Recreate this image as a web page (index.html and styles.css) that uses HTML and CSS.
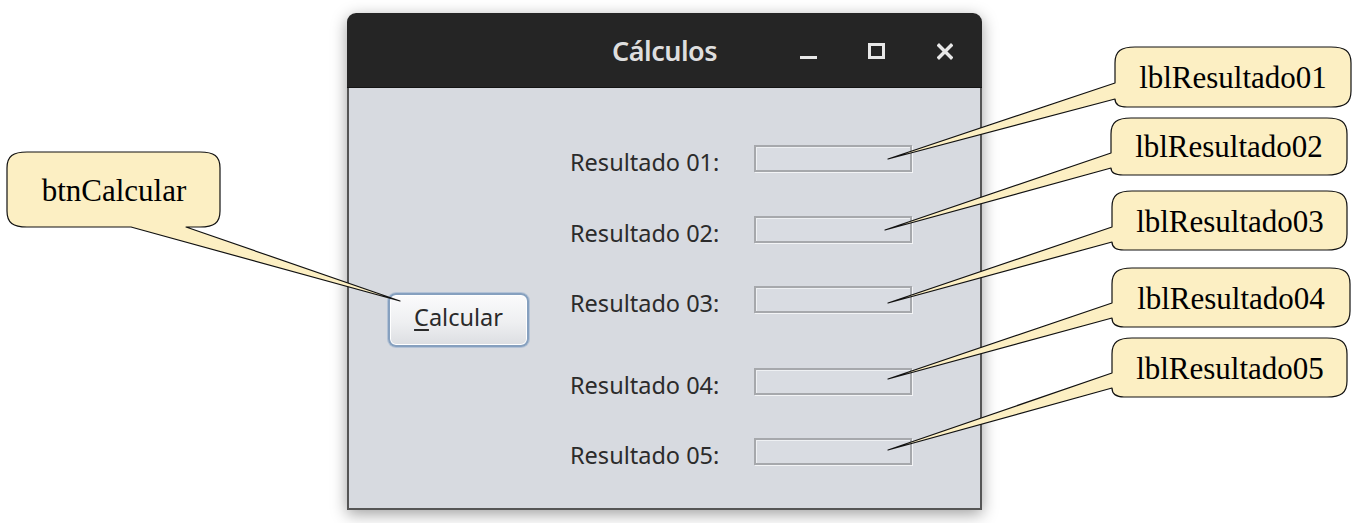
FILE: index.html
```html
<!DOCTYPE html>
<html lang="pt">
<head>
<meta charset="utf-8">
<title>Cálculos</title>
<link rel="stylesheet" href="styles.css">
</head>
<body>
<div class="stage">
  <div class="window">
    <div class="titlebar">
      <span class="spacer"></span>
      <div class="title">Cálculos</div>
      <div class="controls">
        <svg class="ctl" width="17" height="17" viewBox="0 0 17 17"><rect x="0" y="13" width="17" height="3" fill="currentColor"/></svg>
        <svg class="ctl" width="17" height="17" viewBox="0 0 17 17"><rect x="1.5" y="1.5" width="14" height="13" fill="none" stroke="currentColor" stroke-width="3"/></svg>
        <svg class="ctl" width="16" height="17" viewBox="0 0 16 17"><path d="M2 2.5 L14 14.5 M14 2.5 L2 14.5" stroke="currentColor" stroke-width="3.4" stroke-linecap="square"/></svg>
      </div>
    </div>
    <div class="client">
      <button class="btn" type="button"><span><u>C</u>alcular</span></button>
      <div class="fields">
        <div class="row"><span class="label">Resultado 01:</span><span class="field"></span></div>
        <div class="row row-b"><span class="label">Resultado 02:</span><span class="field"></span></div>
        <div class="row"><span class="label">Resultado 03:</span><span class="field"></span></div>
        <div class="row row-wide"><span class="label">Resultado 04:</span><span class="field"></span></div>
        <div class="row"><span class="label">Resultado 05:</span><span class="field"></span></div>
      </div>
    </div>
  </div>

  <svg class="notes" width="1354" height="523" viewBox="0 0 1354 523">
    <g class="callout">
      <path d="M27,152 H200 C214,152 220,156 220,168 V211 C220,223 214,227 200,227 H186 L400,301 L131,227 H27 C13,227 7,223 7,211 V168 C7,156 13,152 27,152 Z"/>
      <text x="114" y="201">btnCalcular</text>
    </g>
    <g class="callout">
      <path d="M1135,47 H1331 C1345,47 1351,51 1351,63 V91 C1351,103 1345,107 1331,107 H1127 C1119,107 1115,104 1115,99 L888,159 L1115,83 V63 C1115,51 1121,47 1135,47 Z"/>
      <text x="1233" y="88">lblResultado01</text>
    </g>
    <g class="callout">
      <path d="M1131,118 H1327 C1341,118 1347,122 1347,134 V159 C1347,171 1341,175 1327,175 H1123 C1115,175 1111,172 1111,168 L885,230 L1111,153 V134 C1111,122 1117,118 1131,118 Z"/>
      <text x="1229" y="157">lblResultado02</text>
    </g>
    <g class="callout">
      <path d="M1132,191 H1327 C1341,191 1347,195 1347,207 V234 C1347,246 1341,250 1327,250 H1124 C1116,250 1112,247 1112,242 L888,303 L1112,227 V207 C1112,195 1118,191 1132,191 Z"/>
      <text x="1230" y="232">lblResultado03</text>
    </g>
    <g class="callout">
      <path d="M1132,268 H1330 C1344,268 1350,272 1350,284 V311 C1350,323 1344,327 1330,327 H1124 C1116,327 1112,324 1112,318 L888,379 L1112,303 V284 C1112,272 1118,268 1132,268 Z"/>
      <text x="1231" y="309">lblResultado04</text>
    </g>
    <g class="callout">
      <path d="M1132,338 H1327 C1341,338 1347,342 1347,354 V381 C1347,393 1341,397 1327,397 H1124 C1116,397 1112,394 1112,388 L888,450 L1112,373 V354 C1112,342 1118,338 1132,338 Z"/>
      <text x="1230" y="379">lblResultado05</text>
    </g>
  </svg>
</div>
</body>
</html>
```

FILE: styles.css
```css
html, body {
  margin: 0;
  padding: 0;
  background: #ffffff;
}

.stage {
  position: relative;
  width: 1354px;
  height: 523px;
  box-sizing: border-box;
  padding: 13px 0 0 347px;
  overflow: hidden;
  font-family: "Noto Sans", "Open Sans", sans-serif;
}

/* ---------- window frame ---------- */
.window {
  width: 635px;
  height: 497px;
  display: flex;
  flex-direction: column;
  border-radius: 9px 9px 0 0;
  box-shadow: 0 4px 16px rgba(0, 0, 0, 0.38);
}

.titlebar {
  height: 75px;
  flex: none;
  display: grid;
  grid-template-columns: 1fr auto 1fr;
  align-items: center;
  background: #252525;
  border-radius: 9px 9px 0 0;
  border-bottom: 1px solid #141414;
  box-sizing: border-box;
}

.title {
  color: #dedede;
  font-size: 27px;
  font-weight: 600;
  letter-spacing: -0.5px;
}

.controls {
  justify-self: end;
  display: flex;
  align-items: center;
  gap: 51px;
  padding-right: 29px;
  padding-top: 2px;
  color: #e8e8e8;
}

.controls .ctl:last-child {
  margin-left: 1px;
}

.ctl {
  display: block;
}

/* ---------- client area ---------- */
.client {
  flex: 1;
  display: flex;
  align-items: flex-start;
  background: #d7dae0;
  border: 2px solid #555555;
  border-top: none;
  padding-left: 39px;
}

.btn {
  margin-top: 205px;
  width: 141px;
  height: 54px;
  padding: 0 0 6px;
  display: flex;
  align-items: center;
  justify-content: center;
  font-family: "Noto Sans", "Open Sans", sans-serif;
  font-size: 23.5px;
  color: #2a2a2a;
  border: 2px solid #86a0bf;
  border-radius: 8px;
  background: linear-gradient(#fbfbfc, #eeeff1 55%, #dcdee2);
  box-shadow: inset 0 0 0 1px #ffffff, 0 0 0 1px rgba(150, 175, 205, 0.55);
  box-sizing: border-box;
}

.btn u {
  text-decoration-thickness: 2px;
  text-underline-offset: 3px;
}

.fields {
  margin-left: 41px;
  padding-top: 57px;
  display: flex;
  flex-direction: column;
  gap: 43px;
}

.row {
  display: grid;
  grid-template-columns: 184px 158px;
  grid-template-rows: 27px;
}

.row-b {
  margin-top: 1px;
}

.row-wide {
  margin-top: 12px;
}

.label {
  align-self: end;
  line-height: 19px;
  font-size: 23.5px;
  color: #2b2b2b;
  white-space: nowrap;
}

.field {
  display: block;
  height: 27px;
  border: 2px solid #a6a8ac;
  box-sizing: border-box;
  background: #d9dce2;
  box-shadow: inset 1px 1px 0 #eef0f3, 1px 1px 0 #f3f4f6;
}

/* ---------- annotation layer ---------- */
.notes {
  position: absolute;
  left: 0;
  top: 0;
  pointer-events: none;
}

.callout path {
  fill: #fcefc3;
  stroke: #111111;
  stroke-width: 1.2;
  stroke-linejoin: round;
}

.callout text {
  font-family: "Liberation Serif", "Times New Roman", serif;
  font-size: 31px;
  fill: #000000;
  text-anchor: middle;
}
```
